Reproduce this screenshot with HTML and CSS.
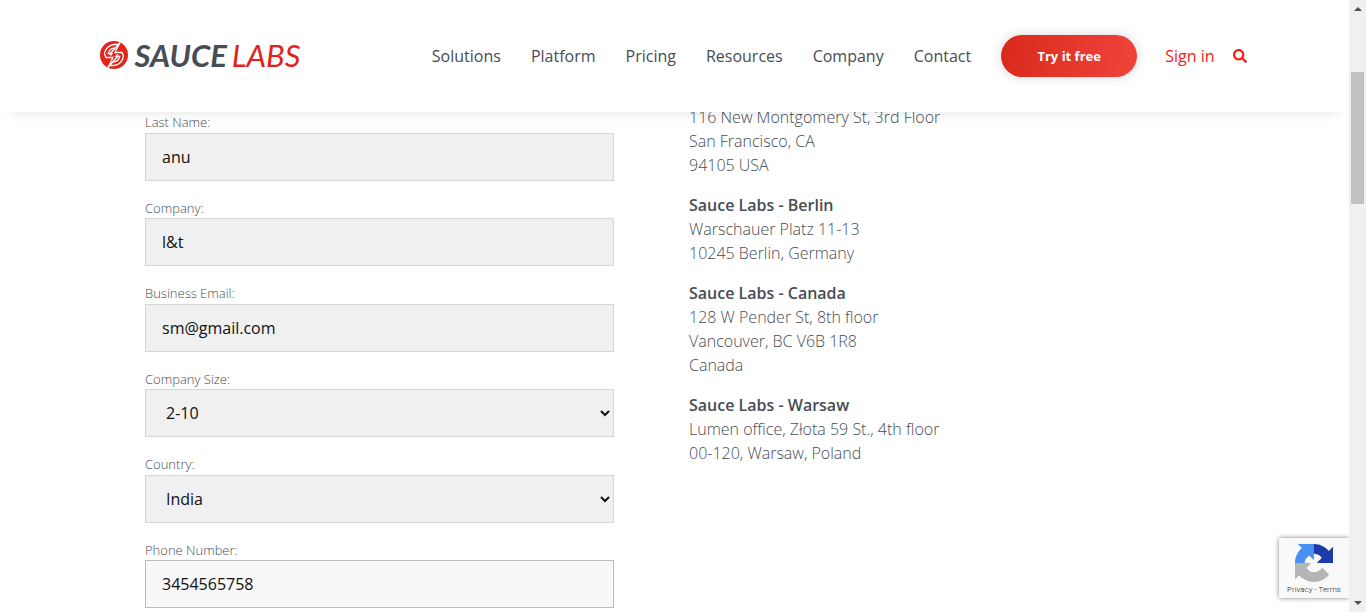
FILE: index.html
```
<!DOCTYPE html>
<html lang="en">
<head>
<meta charset="utf-8">
<title>Contact - Sauce Labs</title>
<link rel="stylesheet" href="styles.css">
</head>
<body>
<div class="page">
  <header class="header">
    <div class="header-inner">
      <a class="logo" href="#" aria-label="Sauce Labs">
        <svg class="logo-mark" viewBox="0 0 28 28" aria-hidden="true">
          <circle cx="14" cy="14" r="14" fill="#e2231a"/>
          <g fill="none" stroke="#fff" stroke-width="1.3">
            <path d="M18 3.500H14C9 4 5 8 4.500 13L6 16.500H13L8 26.500"/>
            <path d="M10 24.500H14C19 24 23 20 23.500 15L22 11.500H15L20 1.500"/>
            <path d="M16 7.200H14C11 7.500 9 9.700 8.300 12.700H12L10.500 14.500"/>
            <path d="M12 20.800H14C17 20.500 19 18.300 19.700 15.300H16L17.500 13.500"/>
            <path d="M20 1.500L9.500 13.500M8 26.500L18.500 14.500"/>
          </g>
        </svg>
        <span class="logo-sauce">SAUCE</span><span class="logo-labs">LABS</span>
      </a>
      <nav class="nav">
        <a href="#">Solutions</a>
        <a href="#">Platform</a>
        <a href="#">Pricing</a>
        <a href="#">Resources</a>
        <a href="#">Company</a>
        <a href="#">Contact</a>
      </nav>
      <button class="cta" type="button">Try it free</button>
      <a class="signin" href="#">Sign in</a>
      <button class="search" type="button" aria-label="Search">
        <svg viewBox="0 0 512 512" aria-hidden="true"><path fill="currentColor" d="M505 442.700L405.300 343c-4.500-4.500-10.600-7-17-7H372c27.600-35.300 44-79.700 44-128C416 93.100 322.900 0 208 0S0 93.100 0 208s93.100 208 208 208c48.300 0 92.700-16.400 128-44v16.300c0 6.400 2.500 12.500 7 17l99.700 99.700c9.400 9.400 24.600 9.400 33.900 0l28.300-28.300c9.400-9.400 9.400-24.600.1-34zM208 336c-70.700 0-128-57.200-128-128 0-70.700 57.200-128 128-128 70.700 0 128 57.200 128 128 0 70.700-57.200 128-128 128z"/></svg>
      </button>
    </div>
  </header>

  <main class="content">
    <form class="form">
      <div class="field"><label for="last">Last Name:</label><input id="last" type="text" value="anu"></div>
      <div class="field"><label for="company">Company:</label><input id="company" type="text" value="l&amp;t"></div>
      <div class="field"><label for="email">Business Email:</label><input id="email" type="email" value="sm@gmail.com"></div>
      <div class="field"><label for="size">Company Size:</label><select id="size"><option>2-10</option></select></div>
      <div class="field"><label for="country">Country:</label><select id="country"><option>India</option></select></div>
      <div class="field"><label for="phone">Phone Number:</label><input id="phone" class="active" type="tel" value="3454565758"></div>
    </form>
    <section class="offices">
      <p>116 New Montgomery St, 3rd Floor<br>San Francisco, CA<br>94105 USA</p>
      <p><strong>Sauce Labs - Berlin</strong><br>Warschauer Platz 11-13<br>10245 Berlin, Germany</p>
      <p><strong>Sauce Labs - Canada</strong><br>128 W Pender St, 8th floor<br>Vancouver, BC V6B 1R8<br>Canada</p>
      <p><strong>Sauce Labs - Warsaw</strong><br>Lumen office, Złota 59 St., 4th floor<br>00-120, Warsaw, Poland</p>
    </section>
  </main>

  <aside class="recaptcha">
    <svg viewBox="0 0 64 64" aria-hidden="true">
      <path fill="#1c3aa9" d="M64 31.955l-.033-1.370V4.687l-7.160 7.160C50.948 4.674 42.033.093 32.050.093c-10.400 0-19.622 4.960-25.458 12.640l11.736 11.860a15.550 15.550 0 0 1 4.754-5.334c2.050-1.600 4.952-2.906 8.968-2.906.485 0 .860.057 1.135.163 4.976.393 9.288 3.140 11.828 7.124l-8.307 8.307L64 31.953"/>
      <path fill="#4a90f5" d="M31.862.094l-1.370.033H4.594l7.160 7.160C4.580 13.147 0 22.060 0 32.046c0 10.400 4.960 19.622 12.640 25.458L24.500 45.768a15.550 15.550 0 0 1-5.334-4.754c-1.600-2.050-2.906-4.952-2.906-8.968 0-.485.057-.860.163-1.135.393-4.976 3.140-9.288 7.124-11.828l8.307 8.307L31.860.095"/>
      <path fill="#b5b5b5" d="M.001 32.045l.033 1.370v25.898l7.160-7.160c5.860 7.173 14.774 11.754 24.760 11.754 10.400 0 19.622-4.960 25.458-12.640l-11.736-11.860a15.550 15.550 0 0 1-4.754 5.334c-2.050 1.600-4.952 2.906-8.968 2.906-.485 0-.860-.057-1.135-.163-4.976-.393-9.288-3.140-11.828-7.124l8.307-8.307c-10.522.040-22.400.066-27.295-.005"/>
    </svg>
    <div class="recaptcha-links"><a href="#">Privacy</a> - <a href="#">Terms</a></div>
  </aside>
</div>

<div class="scrollbar" aria-hidden="true">
  <svg class="arrow" viewBox="0 0 8 4"><path d="M4 0L8 4H0Z"/></svg>
  <div class="track"><div class="thumb"></div></div>
  <svg class="arrow" viewBox="0 0 8 4"><path d="M0 0H8L4 4Z"/></svg>
</div>
</body>
</html>
```
FILE: styles.css
```
* { box-sizing: border-box; }

body {
  margin: 0;
  height: 100vh;
  overflow: hidden;
  display: flex;
  background: #fff;
  color: #474c55;
  font: 300 16px/24px "Open Sans", "Noto Sans", sans-serif;
}

a { color: inherit; text-decoration: none; }

.page {
  position: relative;
  flex: 1;
  min-width: 0;
  height: 100vh;
  overflow: hidden;
}

.header {
  position: absolute;
  z-index: 2;
  top: 0;
  left: 0;
  right: 0;
  height: 112px;
  background: #fff;
  box-shadow: 0 12px 12px -12px rgba(0, 0, 0, .13);
}

.header-inner {
  display: flex;
  align-items: center;
  max-width: 1150px;
  height: 100%;
  margin: 0 auto;
  padding-right: 3px;
}

.logo {
  display: flex;
  align-items: center;
  padding-bottom: 2px;
  font: italic 31px/30px Lato, sans-serif;
}

.logo-mark { width: 28px; height: 28px; margin-right: 7px; }
.logo-sauce { font-weight: 700; color: #474c55; }
.logo-labs { margin-left: 5px; font-weight: 400; color: #e2231a; }

.nav {
  display: flex;
  gap: 30px;
  margin-left: auto;
  font-weight: 400;
}

.cta {
  width: 136px;
  height: 42px;
  margin-left: 30px;
  border: 0;
  border-radius: 21px;
  background: linear-gradient(100deg, #da291c, #f0443b);
  box-shadow: 0 0 12px rgba(0, 0, 0, .16);
  color: #fff;
  font: 700 13px/20px "Open Sans", sans-serif;
}

.signin { margin-left: 28px; color: #fc1a12; font-weight: 400; }

.search {
  width: 14px;
  height: 14px;
  margin-left: 18px;
  padding: 0;
  border: 0;
  background: none;
  color: #fc1a12;
}

.search svg { display: block; width: 100%; }

.content {
  display: grid;
  grid-template-columns: minmax(0, 469px) minmax(0, 1fr);
  column-gap: 75px;
  max-width: 1059px;
  margin: 0 auto;
  padding-top: 105px;
}

.form {
  display: flex;
  flex-direction: column;
  gap: 18px;
  padding-top: 8px;
}

.field label {
  display: block;
  font-size: 13px;
  line-height: 1.5;
}

.field input,
.field select {
  display: block;
  width: 100%;
  height: 48px;
  padding: 0 16px;
  border: 1px solid #d6d6d6;
  border-radius: 0;
  background-color: #f0f0f0;
  color: #111;
  font: 400 16px/24px "Open Sans", sans-serif;
}

.field .active {
  border-color: #bbb;
  background-color: #f8f8f8;
}

.offices p { margin: 0 0 16px; }
.offices strong { font-weight: 600; }

.recaptcha {
  position: absolute;
  z-index: 3;
  right: 0;
  bottom: 14px;
  width: 70px;
  padding-top: 6px;
  border-radius: 2px 0 0 2px;
  background: #f9f9f9;
  box-shadow: 0 0 5px gray;
  text-align: center;
}

.recaptcha svg { display: block; width: 38px; height: 38px; margin: 0 auto; }

.recaptcha-links {
  color: #222;
  font: 300 8px/16px Roboto, sans-serif;
}

.scrollbar {
  z-index: 4;
  display: flex;
  flex-direction: column;
  align-items: center;
  width: 17px;
  padding: 7px 0;
  background: #f0f0f0;
}

.arrow { width: 8px; height: 4px; fill: #505050; }
.track { flex: 1; width: 13px; padding-top: 61px; }
.thumb { height: 132px; background: #c1c1c1; }
```
